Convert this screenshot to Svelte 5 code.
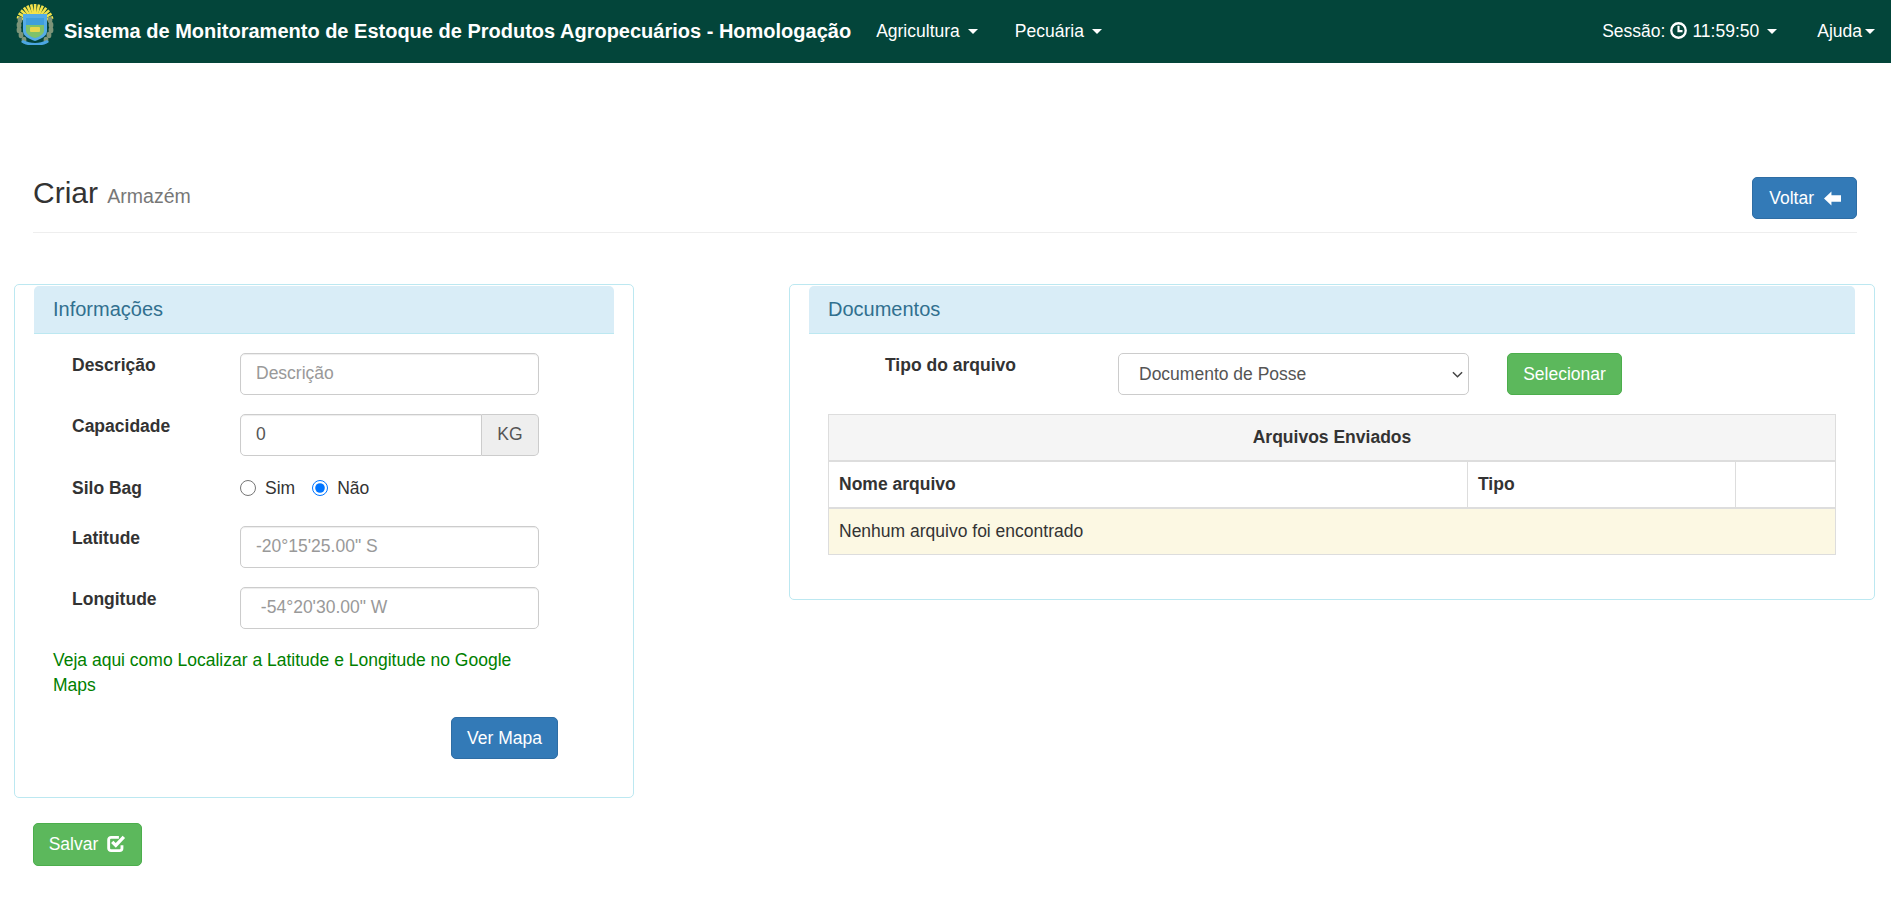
<script>
  const rays = Array.from({ length: 13 }, (_, i) => -72 + i * 12);
  const leaves = [
    [5, 17], [4, 22], [4, 27], [6, 32], [9, 37],
    [35, 17], [36, 22], [36, 27], [34, 32], [31, 37]
  ];
</script>

<nav class="navbar">
  <svg class="logo" viewBox="0 0 40 44" aria-label="Brasão">
    {#each rays as a}
      <rect x="18.8" y="1" width="2.6" height="10" fill="#f4e34a" transform="rotate({a} 20 20)" />
    {/each}
    {#each leaves as l}
      <ellipse cx={l[0]} cy={l[1]} rx="2.4" ry="3.2" fill="#7d9478" />
    {/each}
    <path d="M8 11h24v17c0 5-6 8-12 10-6-2-12-5-12-10z" fill="#55ace6" />
    <path d="M11 15h18v13c0 3-5 6-9 7-4-1-9-4-9-7z" fill="#7fc26a" />
    <path d="M11 15h18v7H11z" fill="#3f9fdc" />
    <rect x="15" y="24" width="10" height="5" rx="1" fill="#e7d84f" />
    <path d="M6 39c5 4 9 3 14 3s9 1 14-3l-2-2c-4 2-8 3-12 3s-8-1-12-3z" fill="#4ba6e3" />
  </svg>
  <span class="brand">Sistema de Monitoramento de Estoque de Produtos Agropecuários - Homologação</span>
  <span class="menu first">Agricultura<i class="caret"></i></span>
  <span class="menu">Pecuária<i class="caret"></i></span>
  <span class="menu session"><span>Sessão:</span><svg class="clock" viewBox="0 0 16 16"><circle cx="8" cy="8" r="6.8" fill="none" stroke="currentColor" stroke-width="2.2" /><path d="M8 3.6v5h3.8" fill="none" stroke="currentColor" stroke-width="2" /></svg><span>11:59:50</span><i class="caret"></i></span>
  <span class="menu help">Ajuda<i class="caret tight"></i></span>
</nav>

<header class="page-header">
  <h3>Criar <small>Armazém</small></h3>
  <button class="btn primary back">
    Voltar
    <svg class="icon" viewBox="0 0 16 14"><path d="M0 7l7-6.5V4h9v6H7v3.5z" fill="currentColor" /></svg>
  </button>
</header>

<main class="columns">
  <section class="panel info">
    <h4 class="heading">Informações</h4>
    <div class="form">
      <div class="row">
        <span class="label">Descrição</span>
        <input class="control" placeholder="Descrição" />
      </div>
      <div class="row">
        <span class="label">Capacidade</span>
        <div class="group">
          <input class="control joined" value="0" />
          <span class="addon">KG</span>
        </div>
      </div>
      <div class="row radios">
        <span class="label">Silo Bag</span>
        <label class="radio"><input type="radio" name="silo" />Sim</label>
        <label class="radio"><input type="radio" name="silo" checked />Não</label>
      </div>
      <div class="row">
        <span class="label">Latitude</span>
        <input class="control" placeholder={'-20°15\'25.00" S'} />
      </div>
      <div class="row">
        <span class="label">Longitude</span>
        <input class="control" placeholder={' -54°20\'30.00" W'} />
      </div>
    </div>
    <p class="hint">Veja aqui como Localizar a Latitude e Longitude no Google Maps</p>
    <div class="map-action"><button class="btn primary">Ver Mapa</button></div>
  </section>

  <section class="panel docs">
    <h4 class="heading">Documentos</h4>
    <div class="file-row">
      <span class="file-label">Tipo do arquivo</span>
      <div class="select-wrap">
        <select class="file-select"><option>Documento de Posse</option></select>
        <svg class="chevron" viewBox="0 0 12 7"><path d="M1 1l5 5 5-5" fill="none" stroke="currentColor" stroke-width="1.6" /></svg>
      </div>
      <button class="btn success">Selecionar</button>
    </div>
    <table>
      <colgroup><col class="c1" /><col class="c2" /><col /></colgroup>
      <thead>
        <tr class="title"><th colspan="3">Arquivos Enviados</th></tr>
        <tr><th>Nome arquivo</th><th>Tipo</th><th></th></tr>
      </thead>
      <tbody>
        <tr class="empty"><td colspan="3">Nenhum arquivo foi encontrado</td></tr>
      </tbody>
    </table>
  </section>
</main>

<div class="save">
  <button class="btn success">
    Salvar
    <svg class="icon check" viewBox="0 0 16 16"><path d="M12.6 9.5V12a2 2 0 0 1-2 2H3.4a2 2 0 0 1-2-2V4.8a2 2 0 0 1 2-2H10" fill="none" stroke="currentColor" stroke-width="2.4" /><path d="M4.4 6.6l3 3L14.2 2.4" fill="none" stroke="currentColor" stroke-width="2.8" /></svg>
  </button>
</div>

<style>
  :global(body) {
    font-family: "Liberation Sans", Arial, sans-serif;
    font-size: 17.5px;
    line-height: 25px;
    color: #333;
    background: #fff;
  }
  .navbar {
    display: flex;
    align-items: center;
    height: 63px;
    background: #03453a;
    color: #fff;
    padding: 0 16px 0 15px;
    box-sizing: border-box;
  }
  .logo {
    width: 40px;
    height: 44px;
    flex: none;
    margin-right: 9px;
    margin-bottom: 13px;
  }
  .brand {
    font-size: 20px;
    font-weight: 700;
    white-space: nowrap;
  }
  .menu {
    display: inline-flex;
    align-items: center;
    white-space: nowrap;
  }
  .first { margin-left: 25px; }
  .menu + .menu { margin-left: 37px; }
  .menu.session { margin-left: auto; }
  .menu.help { margin-left: 40px; }
  .caret {
    display: inline-block;
    width: 0;
    height: 0;
    margin-left: 8px;
    border-top: 5px solid currentColor;
    border-left: 5px solid transparent;
    border-right: 5px solid transparent;
  }
  .caret.tight { margin-left: 3px; }
  .clock {
    width: 17px;
    height: 17px;
    margin: 0 5px 2px 5px;
  }
  .page-header {
    display: flex;
    align-items: center;
    justify-content: space-between;
    margin: 114px 34px 0 33px;
    padding-bottom: 13px;
    border-bottom: 1px solid #eee;
  }
  h3 {
    margin: 0 0 7px;
    font-size: 30px;
    font-weight: 500;
    line-height: 32px;
  }
  small {
    font-size: 19.5px;
    font-weight: 400;
    color: #777;
    margin-left: 1px;
  }
  .btn {
    display: inline-flex;
    align-items: center;
    justify-content: center;
    height: 42px;
    padding: 0 15px;
    box-sizing: border-box;
    border: 1px solid transparent;
    border-radius: 5px;
    font: inherit;
    color: #fff;
  }
  .btn.back { padding-left: 16px; }
  .primary { background: #337ab7; border-color: #2e6da4; }
  .success { background: #5cb85c; border-color: #4cae4c; }
  .icon {
    width: 17px;
    height: 15px;
    margin-left: 10px;
  }
  .icon.check { width: 19px; height: 19px; margin-left: 9px; margin-top: -3px; }
  .columns {
    display: flex;
    align-items: flex-start;
    margin: 51px 16px 0 14px;
    gap: 155px;
  }
  .panel {
    box-sizing: border-box;
    border: 1px solid #bce8f1;
    border-radius: 5px;
    background: #fff;
  }
  .info {
    flex: 0 0 620px;
    height: 514px;
    padding: 1px 19px;
  }
  .docs {
    flex: 1;
    height: 316px;
    padding: 1px 19px;
  }
  .heading {
    height: 48px;
    margin: 0;
    box-sizing: border-box;
    padding: 0 19px;
    display: flex;
    align-items: center;
    background: #d9edf7;
    border-bottom: 1px solid #bce8f1;
    border-radius: 5px 5px 0 0;
    color: #31708f;
    font-size: 20px;
    font-weight: 400;
  }
  .form {
    padding-top: 19px;
  }
  .row {
    display: flex;
    align-items: flex-start;
    margin-bottom: 19px;
  }
  .label {
    flex: 0 0 168px;
    margin-left: 38px;
    font-weight: 700;
    color: #333;
  }
  .control {
    width: 299px;
    height: 42px;
    box-sizing: border-box;
    padding: 0 15px 2px;
    border: 1px solid #ccc;
    border-radius: 5px;
    font: inherit;
    color: #555;
    background: #fff;
    box-shadow: inset 0 1px 1px rgba(0, 0, 0, 0.075);
  }
  .control::placeholder { color: #999; opacity: 1; }
  .group { display: flex; width: 299px; }
  .control.joined {
    flex: 1;
    width: auto;
    min-width: 0;
    border-radius: 5px 0 0 5px;
  }
  .addon {
    flex: 0 0 57px;
    box-sizing: border-box;
    height: 42px;
    padding-bottom: 2px;
    display: flex;
    align-items: center;
    justify-content: center;
    background: #eee;
    border: 1px solid #ccc;
    border-left: 0;
    border-radius: 0 5px 5px 0;
    color: #555;
  }
  .row.radios {
    height: 30px;
    margin-top: -2px;
    margin-bottom: 23px;
    align-items: center;
  }
  .radio {
    display: inline-flex;
    align-items: center;
    margin-right: 17px;
    color: #333;
  }
  .radio input {
    width: 16px;
    height: 16px;
    margin: 0 9px 0 0;
    accent-color: #0075ff;
  }
  .hint {
    width: 480px;
    margin: 7px 0 0 19px;
    line-height: 25px;
    color: green;
  }
  .map-action {
    display: flex;
    justify-content: flex-end;
    margin: 19px 56px 0 0;
  }
  .file-row {
    display: flex;
    align-items: flex-start;
    padding-top: 19px;
  }
  .file-label {
    flex: 0 0 309px;
    padding-left: 76px;
    box-sizing: border-box;
    font-weight: 700;
    color: #333;
  }
  .select-wrap {
    position: relative;
    width: 351px;
    height: 42px;
  }
  .file-select {
    width: 100%;
    height: 42px;
    box-sizing: border-box;
    padding: 0 20px;
    border: 1px solid #ccc;
    border-radius: 5px;
    background: #fff;
    font: inherit;
    color: #555;
    appearance: none;
  }
  .chevron {
    position: absolute;
    right: 6px;
    top: 18px;
    width: 11px;
    height: 7px;
    color: #444;
    pointer-events: none;
  }
  .file-row .btn { margin-left: 38px; width: 115px; padding: 0; }
  table {
    border-collapse: collapse;
    table-layout: fixed;
    width: 1008px;
    margin: 19px 0 0 19px;
  }
  .c1 { width: 639px; }
  .c2 { width: 268px; }
  th, td {
    height: 47px;
    padding: 0 10px;
    border: 1px solid #ddd;
    box-sizing: border-box;
    text-align: left;
    font-weight: 700;
    color: #333;
  }
  thead th { border-bottom-width: 2px; }
  .title th { height: 46px; background: #f5f5f5; text-align: center; }
  .empty td { background: #fcf8e3; font-weight: 400; }
  .save { margin: 25px 0 0 33px; }
  .save .btn { height: 43px; width: 109px; padding: 0; }
</style>
